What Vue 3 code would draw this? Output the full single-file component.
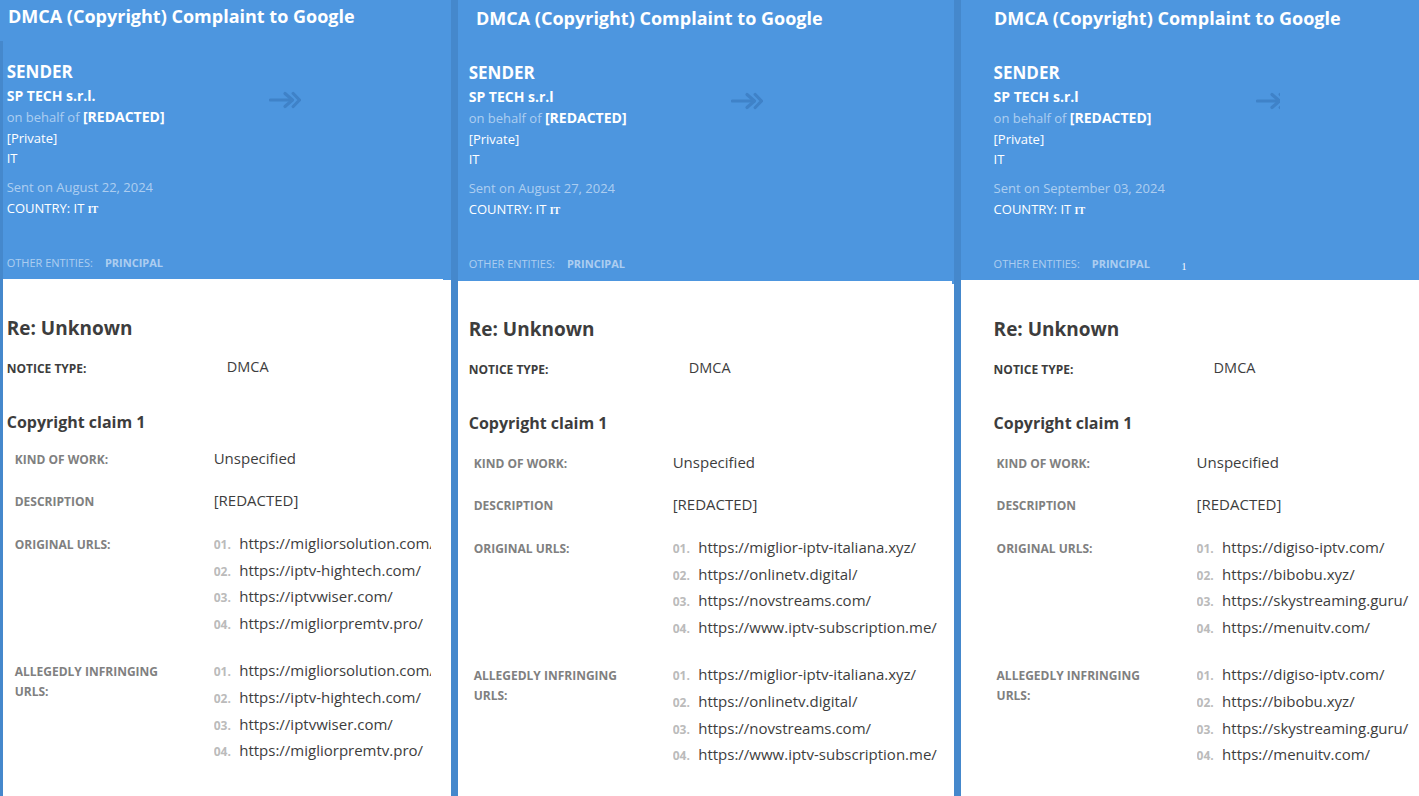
<script setup>
const panels = [
  {
    id: 'p1',
    sp: 'SP TECH s.r.l.',
    date: 'August 22, 2024',
    extra: '',
    orig: ['https://migliorsolution.com/', 'https://iptv-hightech.com/', 'https://iptvwiser.com/', 'https://migliorpremtv.pro/'],
  },
  {
    id: 'p2',
    sp: 'SP TECH s.r.l',
    date: 'August 27, 2024',
    extra: '',
    orig: ['https://miglior-iptv-italiana.xyz/', 'https://onlinetv.digital/', 'https://novstreams.com/', 'https://www.iptv-subscription.me/'],
  },
  {
    id: 'p3',
    sp: 'SP TECH s.r.l',
    date: 'September 03, 2024',
    extra: '1',
    orig: ['https://digiso-iptv.com/', 'https://bibobu.xyz/', 'https://skystreaming.guru/', 'https://menuitv.com/'],
  },
]
const pad = (i) => '0' + (i + 1) + '.'
</script>

<template>
  <div class="page">
    <section v-for="p in panels" :key="p.id" class="panel" :class="p.id">
      <h1 class="title">DMCA (Copyright) Complaint to Google</h1>
      <div class="body">
        <header class="hero">
          <div class="arrow">
            <svg width="32" height="18" viewBox="0 0 32 18" fill="none" stroke="#3f82c8" stroke-width="3.2" stroke-linecap="round" stroke-linejoin="round">
              <path d="M1.5 9H23" />
              <path d="M16 2.5L23.5 9L16 15.5" />
              <path d="M24.2 2.5L30.5 9L24.2 15.5" />
            </svg>
          </div>
          <div class="sender">SENDER</div>
          <div class="sp">{{ p.sp }}</div>
          <div class="behalf">on behalf of <b>[REDACTED]</b></div>
          <div class="line">[Private]</div>
          <div class="line it">IT</div>
          <div class="sent">Sent on {{ p.date }}</div>
          <div class="line">COUNTRY: IT <span class="flag">IT</span></div>
          <div class="entities">
            <span class="ent-label">OTHER ENTITIES:</span>
            <span class="ent-value">PRINCIPAL</span>
            <span v-if="p.extra" class="ent-count">{{ p.extra }}</span>
          </div>
        </header>
        <div class="content">
          <h2 class="re">Re: Unknown</h2>
          <div class="notice">
            <span class="notice-label">NOTICE TYPE:</span>
            <span class="notice-value">DMCA</span>
          </div>
          <h3 class="claim">Copyright claim 1</h3>
          <div class="rows">
            <div class="row kind">
              <div class="label">KIND OF WORK:</div>
              <div class="value">Unspecified</div>
            </div>
            <div class="row desc">
              <div class="label">DESCRIPTION</div>
              <div class="value">[REDACTED]</div>
            </div>
            <div class="row urls">
              <div class="label">ORIGINAL URLS:</div>
              <ol class="list">
                <li v-for="(u, i) in p.orig" :key="u"><span class="num">{{ pad(i) }}</span><span class="url">{{ u }}</span></li>
              </ol>
            </div>
            <div class="row urls infringing">
              <div class="label">ALLEGEDLY INFRINGING URLS:</div>
              <ol class="list">
                <li v-for="(u, i) in p.orig" :key="u"><span class="num">{{ pad(i) }}</span><span class="url">{{ u }}</span></li>
              </ol>
            </div>
          </div>
        </div>
      </div>
    </section>
  </div>
</template>

<style>
html, body { margin: 0; background: #4d96df; }
</style>

<style scoped>
.page {
  display: flex;
  width: 1419px;
  height: 796px;
  overflow: hidden;
  background-color: #4d96df;
  background-image: linear-gradient(#4588cc, #4588cc), linear-gradient(#4588cc, #4588cc);
  background-size: 7px 100%, 7px 100%;
  background-position: 451px 0, 954px 0;
  background-repeat: no-repeat;
  font-family: "Open Sans", "Noto Sans", sans-serif;
  color: #3d3d3d;
}
.panel {
  position: relative;
  display: flex;
  flex-direction: column;
  flex: none;
  box-sizing: border-box;
  overflow: hidden;
}
.p1 { width: 451px; --title-h: 41px; --title-pl: 8px; --title-lh: 32px; --lead: 3.7px; --indent: 8px; --label-w: 199px; --hero-pb: 6px; --hero-h: 238px; --re-mt: 35px; --kind-mt: 15px; --arrow-l: 266px; --arrow-w: 32px; --list-w: 217px; }
.p2 { width: 496px; margin-left: 7px; --title-h: 42px; --title-pl: 18px; --title-lh: 36px; --lead: 10.7px; --indent: 5px; --label-w: 199px; --hero-pb: 7px; --hero-h: 239px; --re-mt: 34px; --kind-mt: 18px; --arrow-l: 273px; --arrow-w: 32px; --list-w: 280px; }
.p3 { width: 458px; margin-left: 7px; --title-h: 42px; --title-pl: 33px; --title-lh: 36px; --lead: 32.6px; --indent: 3px; --label-w: 200px; --hero-pb: 6px; --hero-h: 238px; --re-mt: 35px; --kind-mt: 18px; --arrow-l: 295px; --arrow-w: 24px; --list-w: 222px; }

.title {
  flex: none;
  box-sizing: border-box;
  height: var(--title-h);
  margin: 0;
  padding-left: var(--title-pl);
  font-size: 18px;
  font-weight: 700;
  line-height: var(--title-lh);
  color: #fff;
  white-space: nowrap;
}
.body {
  flex: 1;
  display: flex;
  flex-direction: column;
  background: #fff;
}
.p1 .body { border-left: 3px solid #4588cc; }
.hero {
  position: relative;
  flex: none;
  box-sizing: border-box;
  height: var(--hero-h);
  padding: 18px 0 var(--hero-pb) var(--lead);
  background-color: #4d96df;
  color: #fff;
}
.p1 .hero::after {
  content: "";
  position: absolute;
  right: 0;
  top: 100%;
  width: 8px;
  height: 1px;
  background: #4d96df;
}
.p2 .hero::after {
  content: "";
  position: absolute;
  right: 0;
  top: 100%;
  width: 2px;
  height: 3px;
  background: #4d96df;
}
.arrow {
  position: absolute;
  left: var(--arrow-l);
  top: 50px;
  width: var(--arrow-w);
  height: 18px;
  overflow: hidden;
}
.arrow svg { display: block; }
.sender { margin-top: 1px; font-size: 17px; font-weight: 700; line-height: 24px; }
.sp { margin-top: 2px; font-size: 14px; font-weight: 700; line-height: 20px; }
.behalf { margin-top: 1px; font-size: 13px; line-height: 20px; color: rgba(255, 255, 255, 0.55); }
.behalf b { color: #fff; font-size: 14px; font-weight: 700; }
.line { margin-top: 1px; font-size: 13px; line-height: 20px; }
.line.it { margin-top: 0; }
.sent { margin-top: 9px; font-size: 13px; line-height: 20px; color: rgba(255, 255, 255, 0.55); }
.flag { font-family: "Liberation Serif", serif; font-size: 10px; font-weight: 700; }
.entities { position: relative; margin-top: 33px; font-size: 11px; line-height: 20px; color: rgba(255, 255, 255, 0.55); }
.ent-value { margin-left: 12px; font-weight: 700; }
.ent-count { position: absolute; left: 188px; top: 3px; font-family: "Liberation Serif", serif; font-size: 10px; color: #fff; }

.content { padding-left: var(--lead); }
.re { margin: 0; padding-top: var(--re-mt); font-size: 19px; font-weight: 700; line-height: 28px; }
.notice { display: flex; height: 20px; margin-top: 16px; line-height: 20px; }
.notice-label { width: 220px; padding-top: 1px; font-size: 12px; font-weight: 700; }
.notice-value { margin-top: -1px; font-size: 14.5px; }
.claim { margin: 32px 0 0; font-size: 16px; font-weight: 700; line-height: 24px; }
.rows { padding-left: var(--indent); }
.row { display: flex; line-height: 20px; }
.kind { height: 20px; margin-top: var(--kind-mt); }
.desc { height: 20px; margin-top: 22px; }
.urls { margin-top: 20px; }
.infringing { margin-top: 21px; }
.label {
  flex: none;
  box-sizing: border-box;
  width: var(--label-w);
  padding-top: 1px;
  padding-right: 20px;
  font-size: 12px;
  font-weight: 700;
  color: #808080;
}
.urls .label { padding-top: 4px; }
.value { margin-top: -1px; font-size: 15px; }
.list { flex: none; width: var(--list-w); margin: 0; padding: 0; list-style: none; overflow: hidden; }
.list li { display: flex; height: 26.6px; line-height: 26.6px; white-space: nowrap; }
.num { flex: none; width: 25.5px; padding-top: 1px; font-size: 12px; font-weight: 700; color: #bbb; }
.url { margin-top: -1px; font-size: 15px; }
</style>
